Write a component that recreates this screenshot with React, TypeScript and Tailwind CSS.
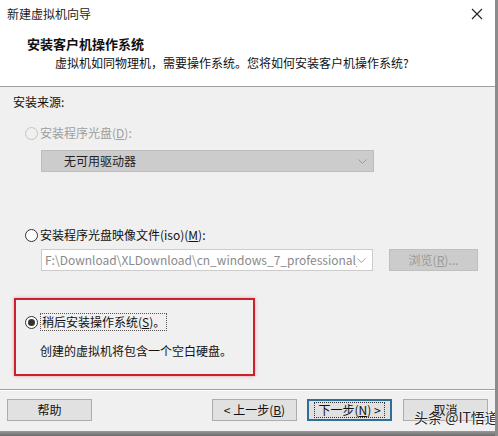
import React from "react";

const font = { fontFamily: '"Noto Sans CJK SC", "Noto Sans", sans-serif' };

function Radio({ checked, disabled }: { checked?: boolean; disabled?: boolean }) {
  return (
    <span
      className={`w-[13px] h-[13px] rounded-full border flex items-center justify-center shrink-0 ${
        disabled ? "border-[#c4c4c4] bg-[#f0f0f0]" : "border-[#333333] bg-white"
      }`}
    >
      {checked && <span className="w-[7px] h-[7px] rounded-full bg-[#333333]" />}
    </span>
  );
}

function Chevron({ color }: { color: string }) {
  return (
    <svg width="9" height="5" viewBox="0 0 9 5" fill="none">
      <path d="M0.5 0.5 4.5 4.5 8.5 0.5" stroke={color} strokeWidth="1" />
    </svg>
  );
}

function Btn({ children, focused, className = "" }: { children: React.ReactNode; focused?: boolean; className?: string }) {
  return (
    <div
      className={`h-[22px] w-[85px] flex items-center justify-center text-[12px] text-[#111] bg-[#e1e1e1] ${
        focused ? "border-2 border-[#2f6f93]" : "border border-[#adadad]"
      } ${className}`}
    >
      {focused ? (
        <span className="border border-dotted border-[#333] px-[3px] leading-[14px]">{children}</span>
      ) : (
        <span className="leading-[14px]">{children}</span>
      )}
    </div>
  );
}

export default function App() {
  return (
    <div
      className="relative w-[498px] h-[436px] bg-[#f0f0f0] border-r-[3px] border-[#8c8c8c] flex flex-col overflow-hidden"
      style={font}
    >
      {/* Title bar */}
      <div className="h-[28px] bg-white flex items-center justify-between pl-[7px] pr-[12px] shrink-0">
        <span className="text-[12px] text-[#222] leading-[18px]">新建虚拟机向导</span>
        <svg width="12" height="12" viewBox="0 0 12 12" fill="none">
          <path d="M1 1 11 11M11 1 1 11" stroke="#222" strokeWidth="1.1" />
        </svg>
      </div>

      {/* Header */}
      <div className="h-[59px] bg-white border-b border-[#a0a0a0] pl-[27px] pt-[6px] shrink-0">
        <div className="text-[13px] font-bold text-[#111] leading-[19px]">安装客户机操作系统</div>
        <div className="text-[12px] text-[#111] leading-[18px] ml-[28px] mt-[1px]">
          虚拟机如同物理机，需要操作系统。您将如何安装客户机操作系统?
        </div>
      </div>

      {/* Body */}
      <div className="flex-1 flex flex-col pt-[6px]">
        <div className="pl-[13px] text-[12px] text-[#111] leading-[18px]">安装来源:</div>

        <div className="pl-[25px] mt-[13px] flex items-center gap-[2px] h-[18px]">
          <Radio disabled />
          <span className="text-[12px] text-[#9e9e9e] leading-[18px]">
            安装程序光盘(<u>D</u>):
          </span>
        </div>

        <div className="ml-[41px] mt-[8px] w-[333px] h-[22px] bg-[#cccccc] border border-[#bdbdbd] flex items-center justify-between pl-[22px] pr-[6px]">
          <span className="text-[12px] text-[#222] leading-[18px]">无可用驱动器</span>
          <Chevron color="#9a9a9a" />
        </div>

        <div className="pl-[25px] mt-[54px] flex items-center gap-[2px] h-[18px]">
          <Radio />
          <span className="text-[12px] text-[#111] leading-[18px]">
            安装程序光盘映像文件(iso)(<u>M</u>):
          </span>
        </div>

        <div className="ml-[41px] mt-[5px] flex items-center">
          <div className="w-[332px] h-[22px] bg-white border border-[#cccccc] flex items-center justify-between pl-[3px] pr-[6px] overflow-hidden">
            <span className="text-[12px] text-[#8a8a8a] leading-[18px] whitespace-nowrap overflow-hidden">
              F:\Download\XLDownload\cn_windows_7_professional_\
            </span>
            <Chevron color="#9a9a9a" />
          </div>
          <div className="ml-[16px] w-[89px] h-[22px] bg-[#cccccc] border border-[#bfbfbf] flex items-center justify-center text-[12px] text-[#9a9a9a] leading-[18px]">
            浏览(<u>R</u>)...
          </div>
        </div>

        {/* Highlighted option */}
        <div className="ml-[14px] mt-[27px] w-[241px] h-[78px] border-2 border-[#c8232c] shadow-[0_0_3px_rgba(220,40,40,0.45)] pl-[9px] pt-[13px]">
          <div className="flex items-center gap-[2px] h-[18px]">
            <Radio checked />
            <span className="text-[12px] text-[#111] leading-[16px] border border-dotted border-[#555] px-[1px]">
              稍后安装操作系统(<u>S</u>)。
            </span>
          </div>
          <div className="mt-[11px] pl-[15px] text-[12px] text-[#111] leading-[18px]">
            创建的虚拟机将包含一个空白硬盘。
          </div>
        </div>

        {/* Separator */}
        <div className="mt-[13px] border-t border-[#a0a0a0] border-b border-b-white" />

        {/* Buttons */}
        <div className="mt-[8px] flex items-center pl-[7px]">
          <Btn>帮助</Btn>
          <Btn className="ml-[120px]">
            &lt; 上一步(<u>B</u>)
          </Btn>
          <Btn focused className="ml-[10px]">
            下一步(<u>N</u>) &gt;
          </Btn>
          <Btn className="ml-[11px]">取消</Btn>
        </div>

        <div className="mt-auto h-[5px] bg-gradient-to-b from-[#9a9a9a] to-[#6a6a6a]" />
      </div>

      {/* Watermark */}
      <div className="absolute left-[414px] top-[408px] text-[14px] text-[#222] leading-[18px] whitespace-nowrap [text-shadow:0_0_2px_#fff,0_0_2px_#fff]">
        头条 @IT悟道
      </div>
    </div>
  );
}
